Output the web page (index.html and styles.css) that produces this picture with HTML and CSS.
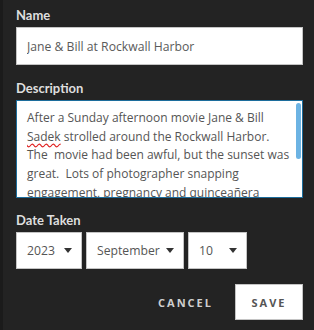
FILE: index.html
```html
<!DOCTYPE html>
<html>
<head>
<meta name="viewport" content="width=device-width, initial-scale=1.0">
<title>Edit Photo</title>
<link rel="stylesheet" href="styles.css">
</head>
<body>
<div class="panel">
	<div class="field">
		<label class="lbl">Name</label>
		<input class="txt" type="text" value="Jane &amp; Bill at Rockwall Harbor">
	</div>
	<div class="field desc">
		<label class="lbl">Description</label>
		<div class="area">
			<div class="area-text">After a Sunday afternoon movie Jane &amp; Bill <span class="typo">Sadek</span> strolled around the Rockwall Harbor.  The  movie had been awful, but the sunset was great.  Lots of photographer snapping engagement, pregnancy and quinceañera photos.</div>
			<div class="thumb"></div>
		</div>
	</div>
	<div class="field">
		<label class="lbl">Date Taken</label>
		<div class="dates">
			<div class="sel w-year"><span>2023</span><svg width="8" height="5" viewBox="0 0 8 5"><path d="M0 0H8L4 5Z" fill="#333"/></svg></div>
			<div class="sel w-month"><span>September</span><svg width="8" height="5" viewBox="0 0 8 5"><path d="M0 0H8L4 5Z" fill="#333"/></svg></div>
			<div class="sel w-day"><span>10</span><svg width="8" height="5" viewBox="0 0 8 5"><path d="M0 0H8L4 5Z" fill="#333"/></svg></div>
		</div>
	</div>
	<div class="actions">
		<button class="btn cancel">CANCEL</button>
		<button class="btn save">SAVE</button>
	</div>
</div>
</body>
</html>
```
FILE: styles.css
```css
html, body{
	margin:0;
	height:100%;
}
body{
	background:#232323;
	border-left:3px solid #1b1b1b;
	box-sizing:border-box;
	font-family:"Open Sans", sans-serif;
}
.panel{
	padding:7px 11px 0 13px;
}
.field{
	display:flex;
	flex-direction:column;
	margin-bottom:15px;
}
.desc{
	margin-bottom:14px;
}
.lbl{
	font:bold 13px Lato, sans-serif;
	line-height:16px;
	color:#dedede;
	margin-bottom:4px;
}
.txt{
	height:38px;
	box-sizing:border-box;
	border:1px solid #c4c4c4;
	padding:0 10px;
	font:12.2px "Open Sans", sans-serif;
	color:#5a5a5a;
	outline:none;
}
.area{
	position:relative;
	height:98px;
	box-sizing:border-box;
	border:1px solid #1c6d9c;
	background:white;
	overflow:hidden;
}
.area-text{
	padding:8px 6px 0 10px;
	font-size:12px;
	line-height:18.7px;
	color:#555;
	white-space:pre-wrap;
}
.typo{
	text-decoration:underline wavy #e02020;
	text-underline-offset:2px;
}
.thumb{
	position:absolute;
	top:2px;
	right:1px;
	width:5px;
	height:56px;
	border-radius:3px;
	background:#6cb3e3;
}
.dates{
	display:flex;
	gap:4px;
}
.sel{
	height:37px;
	box-sizing:border-box;
	border:1px solid #c4c4c4;
	background:white;
	display:flex;
	align-items:center;
	justify-content:space-between;
	padding:0 9px 0 10px;
	font-size:12.2px;
	color:#555;
}
.w-year{ width:66px; }
.w-month{ width:98px; }
.w-day{ width:59px; }
.actions{
	display:flex;
	justify-content:flex-end;
	align-items:center;
	gap:22px;
	margin-top:4px;
}
.btn{
	font:bold 11px "Open Sans", sans-serif;
	letter-spacing:2px;
	border:none;
	padding:0;
}
.cancel{
	background:none;
	color:#cfcfcf;
}
.save{
	width:68px;
	height:36px;
	background:white;
	border:1px solid #c4c4c4;
	color:#555;
}
```
